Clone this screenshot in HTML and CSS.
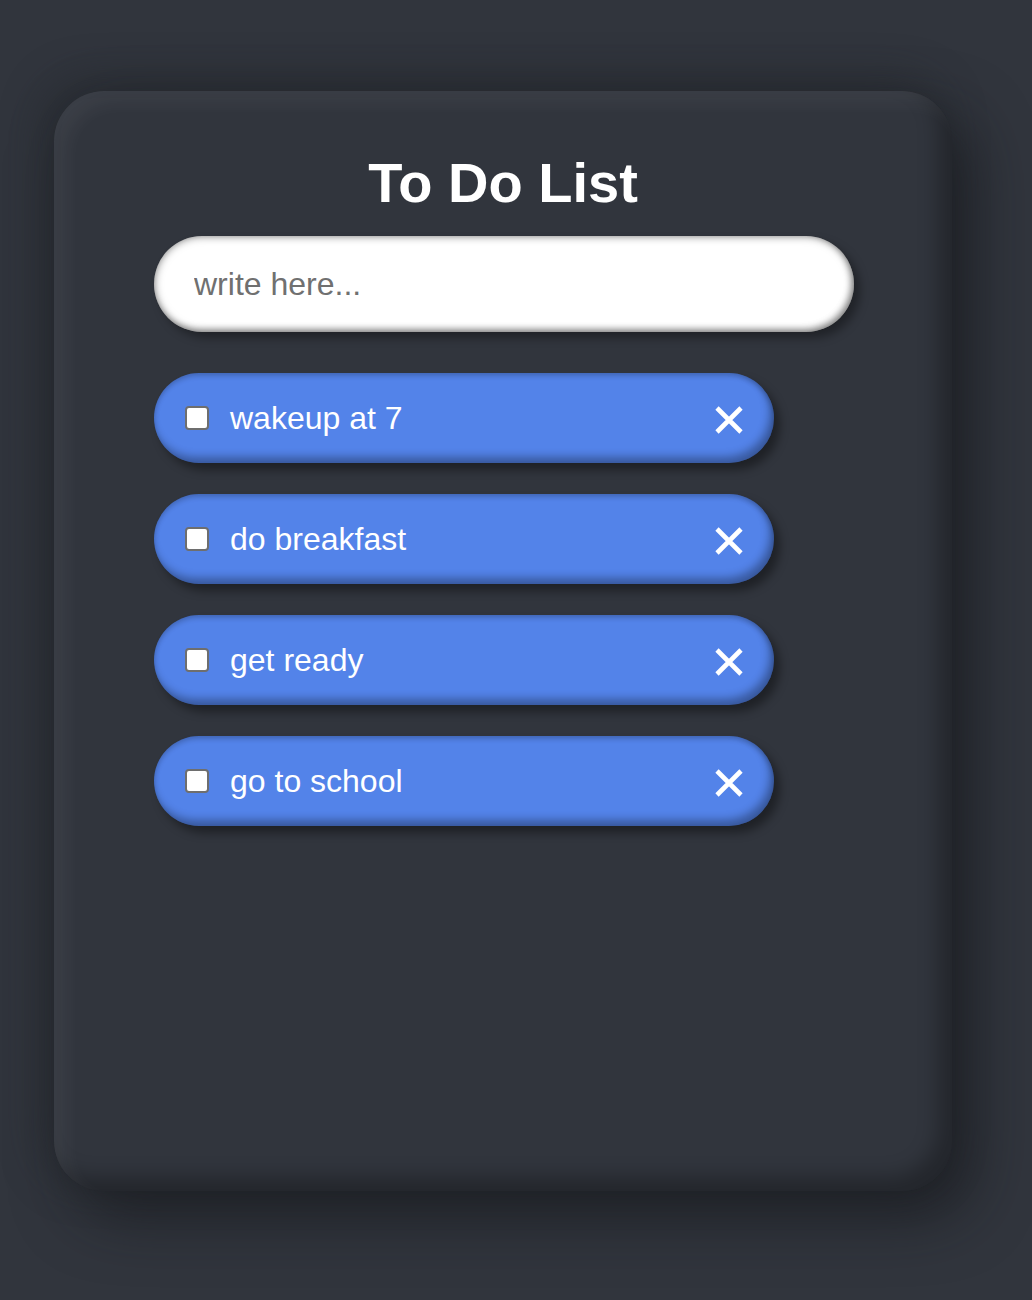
FILE: index.html
```
<!DOCTYPE html>
<html lang="en">
<head>
<meta charset="utf-8">
<title>To Do List</title>
<link rel="stylesheet" href="styles.css">
</head>
<body>
<div class="card">
  <h1 class="title">To Do List</h1>
  <input class="entry" type="text" placeholder="write here...">
  <ul class="list">
    <li class="item"><input class="check" type="checkbox"><span class="label">wakeup at 7</span><span class="del"><svg viewBox="0 0 30 30" width="30" height="30"><path d="M3 3L27 27M27 3L3 27" stroke="#fff" stroke-width="4.6" fill="none"/></svg></span></li>
    <li class="item"><input class="check" type="checkbox"><span class="label">do breakfast</span><span class="del"><svg viewBox="0 0 30 30" width="30" height="30"><path d="M3 3L27 27M27 3L3 27" stroke="#fff" stroke-width="4.6" fill="none"/></svg></span></li>
    <li class="item"><input class="check" type="checkbox"><span class="label">get ready</span><span class="del"><svg viewBox="0 0 30 30" width="30" height="30"><path d="M3 3L27 27M27 3L3 27" stroke="#fff" stroke-width="4.6" fill="none"/></svg></span></li>
    <li class="item"><input class="check" type="checkbox"><span class="label">go to school</span><span class="del"><svg viewBox="0 0 30 30" width="30" height="30"><path d="M3 3L27 27M27 3L3 27" stroke="#fff" stroke-width="4.6" fill="none"/></svg></span></li>
  </ul>
</div>
</body>
</html>
```
FILE: styles.css
```
html, body {
  margin: 0;
  padding: 0;
}
body {
  background: #31353d;
  font-family: "Liberation Sans", Arial, sans-serif;
  padding: 91px 0 0 54px;
  min-height: 1300px;
  box-sizing: border-box;
}
.card {
  width: 898px;
  height: 1100px;
  box-sizing: border-box;
  border-radius: 50px;
  background: #31353d;
  padding: 0 100px;
  box-shadow:
    20px 25px 60px rgba(18, 20, 23, 0.6),
    -10px -10px 40px rgba(35, 38, 43, 0.6),
    inset 12px 12px 18px rgba(255, 255, 255, 0.05),
    inset -14px -14px 20px rgba(0, 0, 0, 0.28);
}
.title {
  margin: 0;
  padding-top: 60px;
  height: 85px;
  line-height: 64px;
  text-align: center;
  color: #fff;
  font-size: 56px;
  font-weight: bold;
}
.entry {
  display: block;
  width: 700px;
  height: 96px;
  box-sizing: border-box;
  border: none;
  outline: none;
  border-radius: 48px;
  padding: 0 40px;
  font-family: "Liberation Sans", Arial, sans-serif;
  font-size: 32px;
  color: #333;
  background: #fff;
  box-shadow:
    6px 6px 10px rgba(0, 0, 0, 0.35),
    inset 0 0 9px rgba(0, 0, 0, 0.5),
    inset -3px -3px 6px rgba(0, 0, 0, 0.25);
}
.entry::placeholder {
  color: #707070;
}
.list {
  list-style: none;
  margin: 41px 0 0;
  padding: 0;
  display: flex;
  flex-direction: column;
  gap: 31px;
}
.item {
  width: 620px;
  height: 90px;
  box-sizing: border-box;
  border-radius: 45px;
  background: #5383e9;
  display: flex;
  align-items: center;
  padding: 0 30px 0 31px;
  color: #fff;
  font-size: 32px;
  box-shadow:
    6px 7px 10px rgba(0, 0, 0, 0.38),
    inset 0 3px 5px rgba(0, 0, 0, 0.2),
    inset -4px -6px 8px rgba(0, 0, 0, 0.32);
}
.check {
  appearance: none;
  -webkit-appearance: none;
  width: 24px;
  height: 24px;
  box-sizing: border-box;
  border: 2px solid #6e6e6e;
  border-radius: 4px;
  background: #fff;
  margin: 0 21px 0 0;
  flex: none;
}
.label {
  flex: 1;
  line-height: 1;
  position: relative;
  top: 0;
}
.del {
  width: 30px;
  height: 30px;
  display: flex;
  position: relative;
  top: 2px;
}
```
